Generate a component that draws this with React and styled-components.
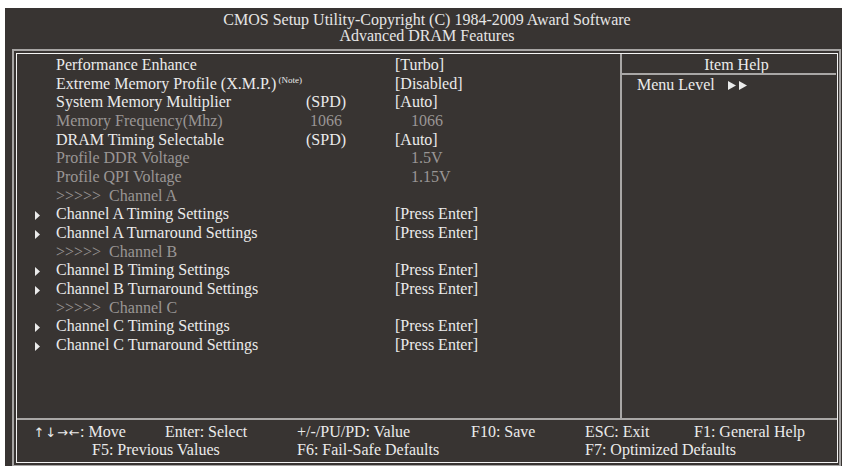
import React from 'react';
import styled, { createGlobalStyle } from 'styled-components';

const Global = createGlobalStyle`
  html, body { margin: 0; padding: 0; background: #ffffff; overflow: hidden; }
  body { width: 842px; height: 466px; }
`;

const Screen = styled.div`
  margin: 8px 0 0 5px;
  width: 844px;
  height: 470px;
  background: #383432;
  font-family: "Liberation Serif", "Times New Roman", serif;
  font-size: 16px;
  color: #ebebeb;
  display: flex;
  flex-direction: column;
`;

const Header = styled.header`
  height: 41px;
  box-sizing: border-box;
  padding-top: 4px;
  text-align: center;
  line-height: 16px;
  color: #e6e6e6;
`;

const OuterFrame = styled.div`
  margin-left: 7px;
  width: 829px;
  box-sizing: border-box;
  border: 2px solid #a7a5a4;
  padding: 2px 1px 2px 2px;
`;

const InnerFrame = styled.div`
  border: 1px solid #f4f4f4;
  height: 408px;
  display: flex;
  flex-direction: column;
`;

const Main = styled.div`
  height: 364px;
  display: grid;
  grid-template-columns: 603px 2px 1fr;
`;

const Divider = styled.div`
  background: #a9a7a6;
  width: 2px;
`;

const LeftPane = styled.div`
  padding-top: 2px;
`;

const Row = styled.div`
  display: grid;
  grid-template-columns: 39px 250px 40px 1fr;
  height: 18.67px;
  line-height: 18.67px;
  white-space: pre;
  color: ${p => (p.$dim ? '#9a9695' : '#ebebeb')};
`;

const Marker = styled.div`
  padding-left: 18px;
  padding-top: 6px;
  box-sizing: border-box;
  display: flex;
  align-items: flex-start;
`;

const Label = styled.div``;

const Note = styled.sup`
  font-size: 9px;
  line-height: 0;
  vertical-align: 6px;
  margin-left: 2px;
`;

const Mid = styled.div`
  text-align: center;
`;

const Value = styled.div`
  padding-left: ${p => (p.$plain ? '65px' : '49px')};
`;

const RightPane = styled.div`
  display: flex;
  flex-direction: column;
`;

const HelpTitle = styled.div`
  height: 19px;
  box-sizing: border-box;
  padding: 2px 0 0 14px;
  line-height: 17px;
  text-align: center;
`;

const HelpRule = styled.div`
  height: 2px;
  margin-right: 1px;
  background: #a9a7a6;
`;

const MenuLevel = styled.div`
  margin-top: 1px;
  padding-left: 15px;
  line-height: 18.67px;
  display: flex;
  align-items: center;
  gap: 13px;
`;

const FooterRule = styled.div`
  height: 2px;
  background: #a9a7a6;
`;

const Footer = styled.div`
  padding-top: 3px;
`;

const FooterLine = styled.div`
  display: grid;
  grid-template-columns: 132px 132px 174px 114px 109px 1fr;
  padding-left: 16px;
  line-height: 18px;
  height: 18px;
  white-space: pre;
`;

const Key = styled.div`
  grid-column: ${p => p.$col || 'auto'};
  padding-left: ${p => p.$indent || 0}px;
`;

const ArrowGlyph = styled.span`
  display: inline-block;
  width: 11.75px;
  text-align: center;
  font-family: "DejaVu Sans", sans-serif;
  font-size: 13px;
`;

const Arrow = () => (
  <svg width="5" height="9" viewBox="0 0 5 9">
    <polygon points="0,0 5,4.5 0,9" fill="#ebebeb" />
  </svg>
);

const DoubleArrow = () => (
  <svg width="20" height="9" viewBox="0 0 20 9">
    <polygon points="0,0 8,4.5 0,9" fill="#ebebeb" />
    <polygon points="11,0 19,4.5 11,9" fill="#ebebeb" />
  </svg>
);

const rows = [
  { label: 'Performance Enhance', value: '[Turbo]' },
  { label: 'Extreme Memory Profile (X.M.P.)', note: true, value: '[Disabled]' },
  { label: 'System Memory Multiplier', mid: '(SPD)', value: '[Auto]' },
  { label: 'Memory Frequency(Mhz)', mid: '1066', value: '1066', dim: true },
  { label: 'DRAM Timing Selectable', mid: '(SPD)', value: '[Auto]' },
  { label: 'Profile DDR Voltage', value: '1.5V', dim: true },
  { label: 'Profile QPI Voltage', value: '1.15V', dim: true },
  { label: '>>>>>  Channel A', dim: true },
  { sub: true, label: 'Channel A Timing Settings', value: '[Press Enter]' },
  { sub: true, label: 'Channel A Turnaround Settings', value: '[Press Enter]' },
  { label: '>>>>>  Channel B', dim: true },
  { sub: true, label: 'Channel B Timing Settings', value: '[Press Enter]' },
  { sub: true, label: 'Channel B Turnaround Settings', value: '[Press Enter]' },
  { label: '>>>>>  Channel C', dim: true },
  { sub: true, label: 'Channel C Timing Settings', value: '[Press Enter]' },
  { sub: true, label: 'Channel C Turnaround Settings', value: '[Press Enter]' },
];

export default function App() {
  return (
    <>
      <Global />
      <Screen>
        <Header>
          <div>CMOS Setup Utility-Copyright (C) 1984-2009 Award Software</div>
          <div>Advanced DRAM Features</div>
        </Header>
        <OuterFrame>
          <InnerFrame>
            <Main>
              <LeftPane>
                {rows.map((r, i) => (
                  <Row key={i} $dim={r.dim}>
                    <Marker>{r.sub && <Arrow />}</Marker>
                    <Label>
                      {r.label}
                      {r.note && <Note>(Note)</Note>}
                    </Label>
                    <Mid>{r.mid || ''}</Mid>
                    <Value $plain={r.value && !r.value.startsWith('[')}>{r.value || ''}</Value>
                  </Row>
                ))}
              </LeftPane>
              <Divider />
              <RightPane>
                <HelpTitle>Item Help</HelpTitle>
                <HelpRule />
                <MenuLevel>
                  <span>Menu Level</span>
                  <DoubleArrow />
                </MenuLevel>
              </RightPane>
            </Main>
            <FooterRule />
            <Footer>
              <FooterLine>
                <Key>
                  {['↑', '↓', '→', '←'].map(a => (
                    <ArrowGlyph key={a}>{a}</ArrowGlyph>
                  ))}
                  : Move
                </Key>
                <Key>Enter: Select</Key>
                <Key>+/-/PU/PD: Value</Key>
                <Key>F10: Save</Key>
                <Key>ESC: Exit</Key>
                <Key>F1: General Help</Key>
              </FooterLine>
              <FooterLine>
                <Key $col="1 / 3" $indent={59}>F5: Previous Values</Key>
                <Key $col="3 / 5">F6: Fail-Safe Defaults</Key>
                <Key $col="5 / 7">F7: Optimized Defaults</Key>
              </FooterLine>
            </Footer>
          </InnerFrame>
        </OuterFrame>
      </Screen>
    </>
  );
}
